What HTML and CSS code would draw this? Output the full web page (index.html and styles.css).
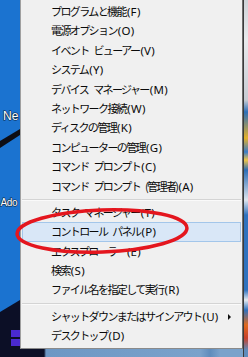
FILE: index.html
```
<!DOCTYPE html>
<html>
  <head>
    <meta charset="utf-8">
    <link rel="stylesheet" href="styles.css">
    <title>Win+X menu</title>
  </head>
  <body>
    <div class="screen">
      <div class="desk-left">
        <svg width="20" height="357" viewBox="0 0 20 357">
          <rect width="20" height="357" fill="#1b73d0"/>
          <polygon points="0,141 20,129 20,135 0,148" fill="#0d0d14"/>
          <polygon points="0,312 20,300 20,357 0,357" fill="#0c0f26"/>
          <rect x="11" y="330" width="9" height="7" fill="#4a2ad0"/>
          <rect x="11" y="339" width="9" height="7" fill="#4a2ad0"/>
          <text x="3" y="120" class="icon-label">Ne</text>
          <text x="0.5" y="206" class="icon-label small">Ado</text>
        </svg>
      </div>

      <div class="middle">
        <div class="menu">
          <ul class="items">
            <li class="item">プログラムと機能<span class="key">(F)</span></li>
            <li class="item">電源オプション<span class="key">(O)</span></li>
            <li class="item">イベント ビューアー<span class="key">(V)</span></li>
            <li class="item">システム<span class="key">(Y)</span></li>
            <li class="item">デバイス マネージャー<span class="key">(M)</span></li>
            <li class="item">ネットワーク接続<span class="key">(W)</span></li>
            <li class="item">ディスクの管理<span class="key">(K)</span></li>
            <li class="item">コンピューターの管理<span class="key">(G)</span></li>
            <li class="item">コマンド プロンプト<span class="key">(C)</span></li>
            <li class="item">コマンド プロンプト (管理者)<span class="key">(A)</span></li>
            <li class="sep"></li>
            <li class="item">タスク マネージャー<span class="key">(T)</span></li>
            <li class="item hot">コントロール パネル<span class="key">(P)</span></li>
            <li class="item">エクスプローラー<span class="key">(E)</span></li>
            <li class="item">検索<span class="key">(S)</span></li>
            <li class="item">ファイル名を指定して実行<span class="key">(R)</span></li>
            <li class="sep"></li>
            <li class="item sub">シャットダウンまたはサインアウト<span class="key">(U)</span></li>
            <li class="item">デスクトップ<span class="key">(D)</span></li>
          </ul>
        </div>
        <div class="desk-bottom"></div>
      </div>

      <div class="desk-right"></div>

      <svg class="mark" width="248" height="357" viewBox="0 0 248 357">
        <ellipse cx="102" cy="231" rx="85" ry="21" transform="rotate(-2 102 231)"
                 fill="none" stroke="#e4161e" stroke-width="3.5"/>
      </svg>
    </div>
  </body>
</html>
```

FILE: styles.css
```
* {
  box-sizing: border-box;
}

body {
  margin: 0;
  width: 248px;
  height: 357px;
  overflow: hidden;
  font-family: "Noto Sans CJK JP", "Noto Sans", sans-serif;
}

.screen {
  position: relative;
  display: flex;
  width: 248px;
  height: 357px;
}

.desk-left {
  width: 20px;
  height: 357px;
  flex-shrink: 0;
}

.desk-left svg {
  display: block;
}

.icon-label {
  font-family: "Liberation Sans", sans-serif;
  font-size: 12px;
  fill: #fff;
  paint-order: stroke;
  stroke: #0a2440;
  stroke-width: 1.2px;
}

.icon-label.small {
  font-size: 10px;
  letter-spacing: -0.4px;
}

.middle {
  width: 223px;
  flex-shrink: 0;
  display: flex;
  flex-direction: column;
}

.menu {
  background-color: #f0f0f0;
  border-left: 1px solid #a0a0a0;
  border-right: 1px solid #6e6e6e;
  border-bottom: 1px solid #8a8a8a;
  padding: 2px 0 2px 0;
}

.items {
  list-style: none;
  margin: 0;
  padding: 0;
}

.item {
  height: 19.4px;
  margin: 0 1px;
  padding-left: 28px;
  border: 1px solid transparent;
  font-size: 11px;
  line-height: 17.4px;
  letter-spacing: -1.6px;
  word-spacing: 4px;
  color: #0a0a0a;
  white-space: nowrap;
  position: relative;
}

.key {
  font-family: "Noto Sans", sans-serif;
  letter-spacing: 0.3px;
  font-size: 11.5px;
  margin-left: 1px;
}

.hot {
  background-color: #d9e7f7;
  border-color: #a3c6ea;
}

.sub::after {
  content: "";
  position: absolute;
  right: 9px;
  top: 6px;
  border-top: 3px solid transparent;
  border-bottom: 3px solid transparent;
  border-left: 3px solid #111;
}

.sep {
  height: 7px;
  margin: 0 1px;
  padding-top: 3px;
}

.sep::before {
  content: "";
  display: block;
  height: 1px;
  background-color: #d4d4d4;
  border-bottom: 1px solid #fafafa;
}

.desk-bottom {
  flex: 1;
  background: linear-gradient(to right, #0c0f26 0, #0c0f26 24px, #6d97c4 26px, #7aa2cb 180px, #5f8cbc 190px, #7aa2cb 200px);
}

.desk-right {
  width: 5px;
  flex-shrink: 0;
  border-left: 1px solid #3a3a3a;
  background: linear-gradient(to bottom,
    #cfd3d8 0, #e8eaec 40px, #c7ccd3 100px, #2d6fb8 112px,
    #e4b12c 138px, #3a7cc8 152px, #f0c64a 160px, #2c6db5 170px,
    #dfe6ee 200px, #2f72be 215px, #2f72be 290px, #e6ebf0 300px,
    #2f72be 310px, #e06a1e 325px, #c8402a 338px, #5f8cbc 350px);
}

.mark {
  position: absolute;
  left: 0;
  top: 0;
  pointer-events: none;
}
```
